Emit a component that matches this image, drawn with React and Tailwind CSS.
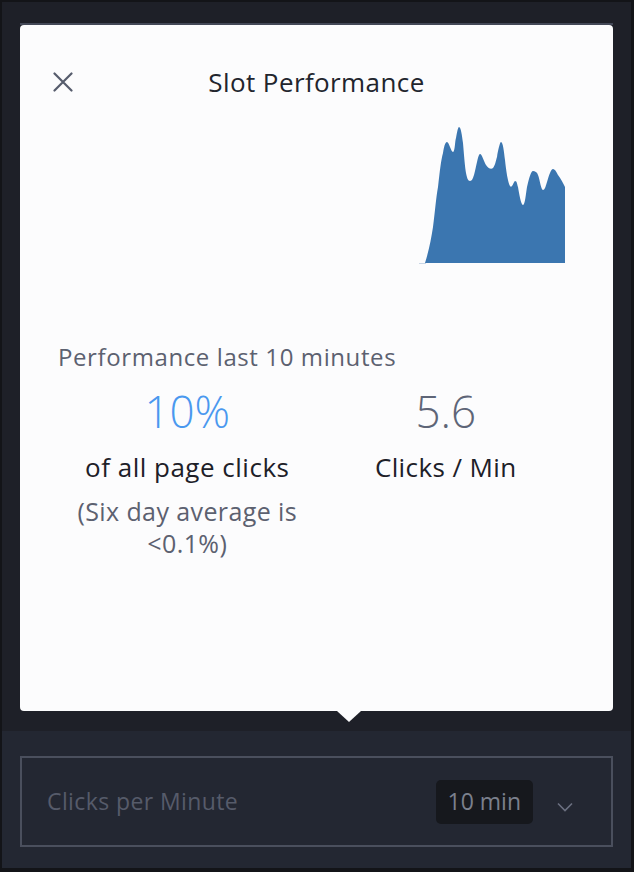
import React from 'react';

const FONT = { fontFamily: '"Open Sans", "Noto Sans", sans-serif' };

function CloseIcon() {
  return (
    <svg width="20" height="20" viewBox="0 0 20 20" fill="none" stroke="#565c6c" strokeWidth="2.2" strokeLinecap="round">
      <path d="M1.5 1.5 L18.5 18.5 M18.5 1.5 L1.5 18.5" />
    </svg>
  );
}

// area chart of clicks
function Sparkline() {
  const d =
    'M425 263 C429 250 431 240 433 227 C435 212 436 198 438 187 C440 170 441 160 443 153 ' +
    'C444 147 445 142 447 142 C449 142 451 152 453 152 C455 152 455 140 456 138 ' +
    'C457 132 458 127 459 127 C461 127 462 136 463 143 C464 155 465 168 466 173 ' +
    'C467 178 468 181 470 181 C472 181 473 178 474 175 C476 168 478 154 480 154 ' +
    'C482 154 484 162 486 165 C488 168 491 170 493 168 C495 166 496 160 497 157 ' +
    'C498 150 500 142 501 142 C503 142 504 152 505 160 C506 170 508 183 510 186 ' +
    'C512 189 514 181 515 181 C517 181 517 184 518 187 C519 193 521 205 523 205 ' +
    'C525 205 526 193 527 187 C529 178 531 171 533 171 C535 171 537 172 538 175 ' +
    'C540 180 541 190 543 190 C545 190 546 185 547 182 C549 175 551 169 553 169 ' +
    'C555 169 557 173 558 175 C561 179 563 183 565 187 L565 263 Z';
  return (
    <svg width="148" height="144" viewBox="419 120 148 144">
      <line x1="419" y1="263.5" x2="426" y2="263.5" stroke="#c9d6e6" strokeWidth="1" />
      <path d={d} fill="#3b76b0" />
    </svg>
  );
}

export default function App() {
  return (
    <div className="w-[634px] h-[872px] bg-[#131418] pl-[2px] pt-[2px] pr-[3px] pb-[4px] flex flex-col" style={FONT}>
      {/* top area with popover */}
      <div className="h-[729px] bg-[#1e2028] px-[18px] pt-[21px]">
        <div className="h-[2px] bg-[#434857]" />
        <div className="relative h-[686px] bg-[#fcfcfd] rounded-[4px] pt-[45px]">
          <div className="grid grid-cols-[1fr_auto_1fr] items-center h-[24px] px-[33px]">
            <div className="flex items-center"><CloseIcon /></div>
            <div className="text-[26px] leading-[24px] text-[#22252d] tracking-[0.4px]">Slot Performance</div>
            <div />
          </div>

          <div className="flex justify-end pr-[46px] mt-[26px]">
            <Sparkline />
          </div>

          <div className="px-[38px] mt-[78px]">
            <div className="text-[24px] leading-[30px] text-[#5c6170] tracking-[0.6px]">Performance last 10 minutes</div>
            <div className="grid grid-cols-2 text-center mt-[14px]">
              <div className="flex flex-col items-center">
                <div className="text-[44px] leading-[50px] text-[#4a98ef] font-light">10%</div>
                <div className="text-[26px] leading-[34px] text-[#1d2028] mt-[14px] tracking-[0.5px]">of all page clicks</div>
                <div className="text-[25px] leading-[32px] text-[#5c6170] mt-[11px] tracking-[0.4px]">(Six day average is &lt;0.1%)</div>
              </div>
              <div className="flex flex-col items-center">
                <div className="text-[44px] leading-[50px] text-[#5e6577] font-light">5.6</div>
                <div className="text-[26px] leading-[34px] text-[#1d2028] mt-[14px] tracking-[0.4px]">Clicks / Min</div>
              </div>
            </div>
          </div>

          <div className="absolute left-[317px] -bottom-[11px] w-0 h-0 border-l-[12px] border-r-[12px] border-t-[11px] border-l-transparent border-r-transparent border-t-[#fcfcfd]" />
        </div>
      </div>

      {/* bottom control */}
      <div className="flex-1 bg-[#232732] px-[18px] pt-[25px]">
        <div className="h-[91px] border-2 border-[#4a4f5d] flex items-center pl-[25px] pr-[38px]">
          <div className="flex-1 text-[23px] text-[#565b6a] tracking-[0.4px]">Clicks per Minute</div>
          <div className="h-[44px] px-[12px] rounded-[5px] bg-[#16181d] flex items-center text-[23px] text-[#7b808d]">10 min</div>
          <svg className="ml-[24px] mt-[10px]" width="16" height="10" viewBox="0 0 16 10" fill="none" stroke="#6b7080" strokeWidth="1.6">
            <path d="M1 1.5 L8 8.5 L15 1.5" />
          </svg>
        </div>
      </div>
    </div>
  );
}
